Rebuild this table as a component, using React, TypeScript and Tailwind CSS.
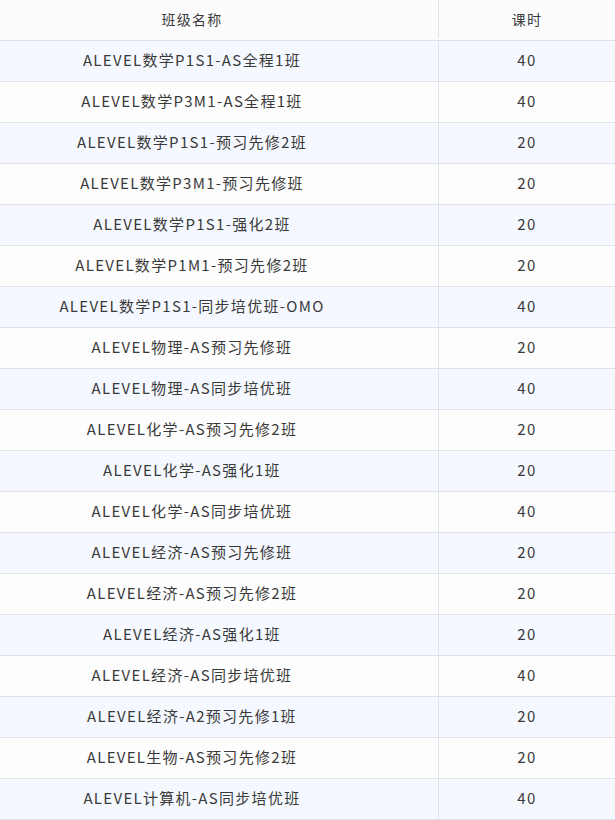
const rows: [string, number][] = [
  ['ALEVEL数学P1S1-AS全程1班', 40],
  ['ALEVEL数学P3M1-AS全程1班', 40],
  ['ALEVEL数学P1S1-预习先修2班', 20],
  ['ALEVEL数学P3M1-预习先修班', 20],
  ['ALEVEL数学P1S1-强化2班', 20],
  ['ALEVEL数学P1M1-预习先修2班', 20],
  ['ALEVEL数学P1S1-同步培优班-OMO', 40],
  ['ALEVEL物理-AS预习先修班', 20],
  ['ALEVEL物理-AS同步培优班', 40],
  ['ALEVEL化学-AS预习先修2班', 20],
  ['ALEVEL化学-AS强化1班', 20],
  ['ALEVEL化学-AS同步培优班', 40],
  ['ALEVEL经济-AS预习先修班', 20],
  ['ALEVEL经济-AS预习先修2班', 20],
  ['ALEVEL经济-AS强化1班', 20],
  ['ALEVEL经济-AS同步培优班', 40],
  ['ALEVEL经济-A2预习先修1班', 20],
  ['ALEVEL生物-AS预习先修2班', 20],
  ['ALEVEL计算机-AS同步培优班', 40],
];

export default function App() {
  return (
    <div
      className="w-[615px] bg-white text-[15px] text-[#3a3a3a] tracking-[1.3px]"
      style={{ fontFamily: '"Noto Sans CJK SC", "Noto Sans", sans-serif' }}
    >
      {/* header */}
      <div className="flex h-[41px] border-b border-[#dfe2e8] bg-[#fcfcfc] pb-[2px] text-[14px]">
        <div className="flex w-[439px] items-center justify-center border-r border-[#dfe2e8] pr-[54px]">班级名称</div>
        <div className="flex flex-1 items-center justify-center">课时</div>
      </div>
      {rows.map(([name, hours], i) => (
        <div
          key={i}
          className={
            'flex h-[41px] border-b border-[#dfe2e8] ' + (i % 2 === 0 ? 'bg-[#f5f9ff]' : 'bg-[#fdfdfd]')
          }
        >
          <div className="flex w-[439px] items-center justify-center border-r border-[#dfe2e8] pr-[54px] pb-[2px]">{name}</div>
          <div className="flex flex-1 items-center justify-center pb-[2px]">{hours}</div>
        </div>
      ))}
    </div>
  );
}
